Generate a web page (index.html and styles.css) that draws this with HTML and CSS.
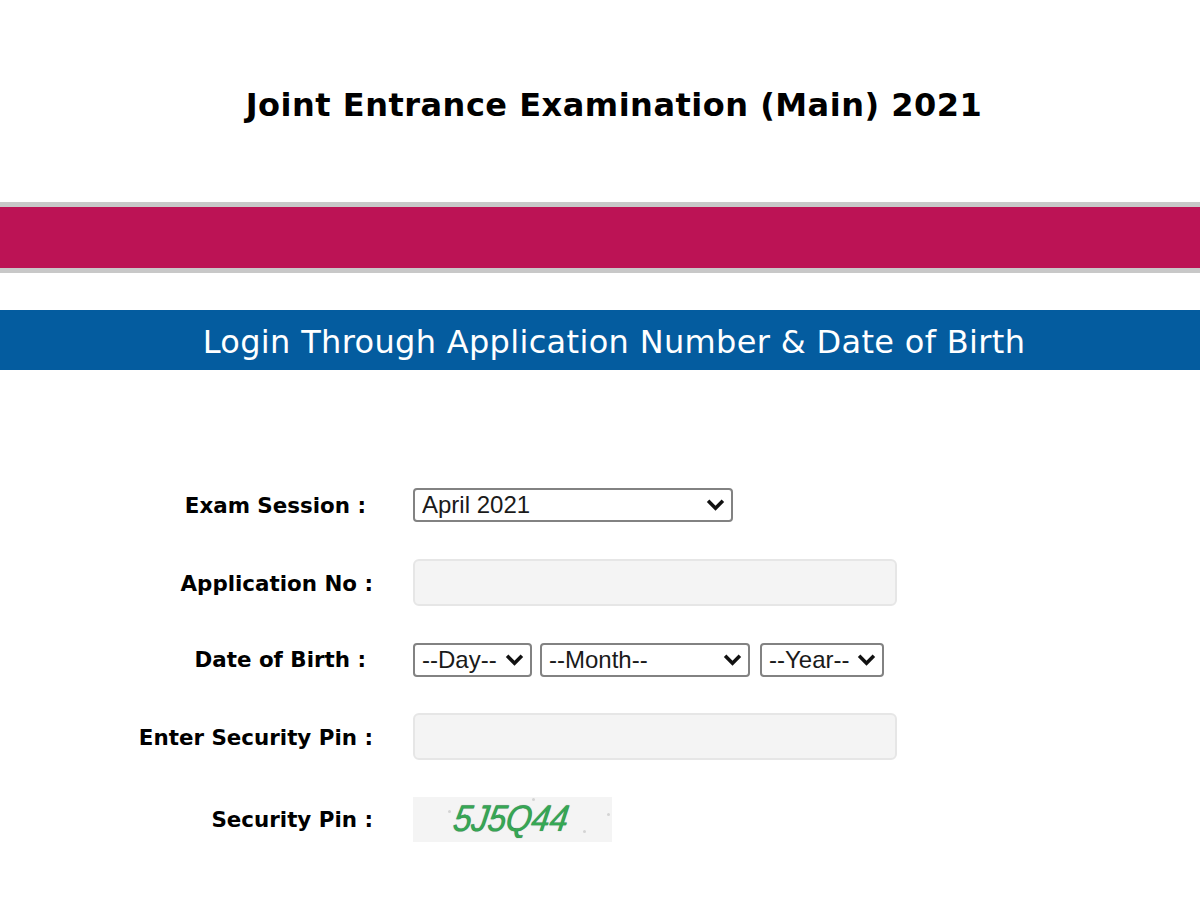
FILE: index.html
```html
<!DOCTYPE html>
<html lang="en">
<head>
<meta charset="utf-8">
<title>Joint Entrance Examination (Main) 2021</title>
<link rel="stylesheet" href="styles.css">
</head>
<body>
<header class="title-area"><h1 class="title">Joint Entrance Examination (Main) 2021</h1></header>
<div class="band"></div>
<h2 class="login-bar">Login Through Application Number &amp; Date of Birth</h2>
<form class="form">
  <div class="row row-session">
    <label class="label label-short label-low">Exam Session :</label>
    <div class="field">
      <span class="select-wrap w-session">
        <select class="select"><option>April 2021</option></select>
        <svg class="chev" viewBox="0 0 18 12"><path d="M2 2.5 9 9.5 16 2.5" /></svg>
      </span>
    </div>
  </div>
  <div class="row row-app">
    <label class="label label-low">Application No :</label>
    <div class="field"><input class="input" type="text"></div>
  </div>
  <div class="row row-dob">
    <label class="label label-short">Date of Birth :</label>
    <div class="field dob">
      <span class="select-wrap w-day">
        <select class="select"><option>--Day--</option></select>
        <svg class="chev" viewBox="0 0 18 12"><path d="M2 2.5 9 9.5 16 2.5" /></svg>
      </span>
      <span class="select-wrap w-month">
        <select class="select"><option>--Month--</option></select>
        <svg class="chev" viewBox="0 0 18 12"><path d="M2 2.5 9 9.5 16 2.5" /></svg>
      </span>
      <span class="select-wrap w-year">
        <select class="select"><option>--Year--</option></select>
        <svg class="chev" viewBox="0 0 18 12"><path d="M2 2.5 9 9.5 16 2.5" /></svg>
      </span>
    </div>
  </div>
  <div class="row row-pin">
    <label class="label label-low">Enter Security Pin :</label>
    <div class="field"><input class="input" type="text"></div>
  </div>
  <div class="row row-captcha">
    <label class="label">Security Pin :</label>
    <div class="field">
      <div class="captcha">
        <span class="captcha-text">5J5Q44</span>
        <i class="speck s1"></i><i class="speck s2"></i><i class="speck s3"></i><i class="speck s4"></i>
      </div>
    </div>
  </div>
</form>
</body>
</html>
```
FILE: styles.css
```css
* { box-sizing: border-box; }
html, body { margin: 0; padding: 0; background: #fff; }
body { width: 1200px; height: 900px; overflow: hidden; font-family: "DejaVu Sans", Verdana, sans-serif; color: #000; }

.title-area { height: 202px; padding: 84px 0 0 28px; text-align: center; }
.title { margin: 0; font-size: 32px; line-height: 42px; font-weight: 700; letter-spacing: 0.5px; color: #000; }

.band { height: 71px; background: #bc1355; border-top: 5px solid #c8c8c8; border-bottom: 5px solid #c8c8c8; }

.login-bar { margin: 37px 0 0; height: 60px; padding-left: 28px; text-align: center; background: #045c9f; color: #fff; font-size: 32px; line-height: 65px; font-weight: 400; letter-spacing: 0.33px; }

.form { padding-top: 100px; }
.row { display: grid; grid-template-columns: 413px 1fr; align-items: center; }
.row-session { height: 69px; }
.row-app { height: 87px; }
.row-dob { height: 67px; }
.row-pin { height: 87px; }
.row-captcha { height: 79px; }

.label { font-size: 21.4px; font-weight: 700; text-align: right; padding-right: 40px; color: #000; white-space: nowrap; }
.label-short { padding-right: 47px; }
.label-low { padding-top: 2px; }

.dob { display: flex; gap: 8px; }
.select-wrap { position: relative; display: block; height: 34px; }
.w-session { width: 320px; }
.w-day { width: 119px; }
.w-month { width: 210px; }
.w-year { width: 124px; margin-left: 2px; }
.select { display: block; width: 100%; height: 100%; appearance: none; -webkit-appearance: none; background: #fff; border: 2px solid #828282; border-radius: 4px; padding: 0 0 0 7px; margin: 0; font-family: "Liberation Sans", Arial, sans-serif; font-size: 24px; color: #1a1a1a; }
.chev { position: absolute; right: 8px; top: 10px; width: 19px; height: 13px; pointer-events: none; }
.chev path { fill: none; stroke: #111; stroke-width: 3.4; }

.input { display: block; width: 484px; height: 47px; background: #f4f4f4; border: 2px solid #e6e6e6; border-radius: 6px; padding: 0; margin: 0; }

.captcha { position: relative; width: 199px; height: 45px; background: #f4f4f4; padding-left: 41px; line-height: 43px; overflow: hidden; }
.captcha-text { display: inline-block; transform-origin: left center; transform: skewX(-9deg) scaleX(0.89); font-family: "Liberation Sans", Arial, sans-serif; font-style: italic; font-size: 37px; color: #35a853; letter-spacing: -0.2px; -webkit-text-stroke: 0.2px #2c7a47; text-shadow: 0 0 1px #5f8f73; }
.speck { position: absolute; width: 3px; height: 3px; background: #d4d4d4; border-radius: 50%; }
.s1 { left: 194px; top: 16px; }
.s2 { left: 170px; top: 33px; }
.s3 { left: 119px; top: 1px; }
.s4 { left: 35px; top: 13px; }
```
